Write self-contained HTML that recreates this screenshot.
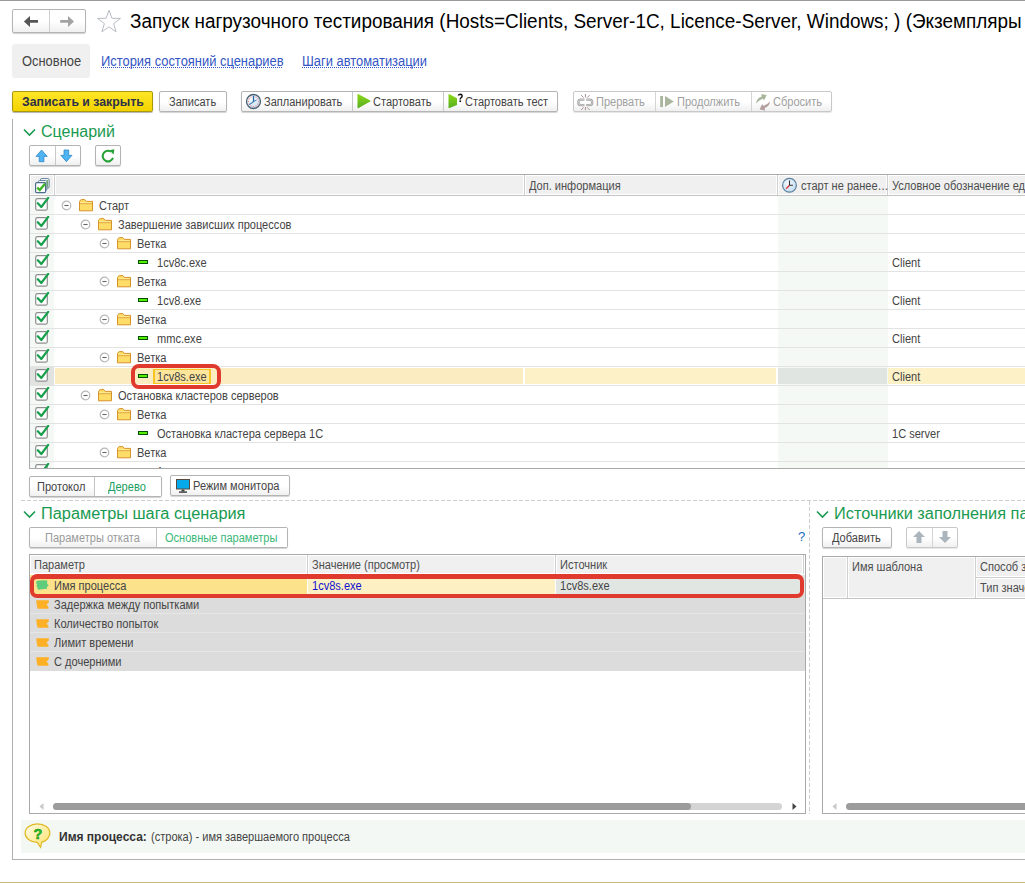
<!DOCTYPE html><html><head><meta charset="utf-8"><style>
*{box-sizing:border-box;margin:0;padding:0}
html,body{width:1025px;height:883px;overflow:hidden;background:#fff}
body{position:relative;font-family:"Liberation Sans",sans-serif;font-size:12px;color:#333}
.a{position:absolute}
.t{position:absolute;white-space:nowrap;line-height:1}
.btn{position:absolute;border:1px solid #b4b4b4;border-radius:2px;background:linear-gradient(#fff,#fff 50%,#f0f0f0);box-shadow:0 1px 1px rgba(0,0,0,.18)}
.hl{position:absolute;height:1px}
.vl{position:absolute;width:1px}
</style></head><body>
<div class="a" style="left:0;top:0;width:1025px;height:1px;background:#9a9a9a"></div>
<div class="btn" style="left:12px;top:9px;width:74px;height:24px"></div>
<div class="vl" style="left:49px;top:10px;height:22px;background:#d0d0d0"></div>
<svg class="a" style="left:23px;top:15px" width="16" height="13" viewBox="0 0 16 13"><path d="M0.9 6.4 L7 0.9 V5 H15 V7.8 H7 V11.9 Z" fill="#555"/></svg>
<svg class="a" style="left:59px;top:15px" width="16" height="13" viewBox="0 0 16 13"><path d="M15 6.4 L9 0.9 V5 H1.2 V7.8 H9 V11.9 Z" fill="#a3a3a3"/></svg>
<svg class="a" style="left:96px;top:9px" width="26" height="24" viewBox="0 0 26 24"><path d="M13 1.2 L15.9 9.3 L24.5 9.4 L17.6 14.6 L20.1 22.8 L13 17.9 L5.9 22.8 L8.4 14.6 L1.5 9.4 L10.1 9.3 Z" fill="none" stroke="#b8bcc4" stroke-width="1"/></svg>
<div class="t" style="left:130px;top:11px;font-size:20px;transform:scaleX(0.946);transform-origin:0 0;color:#000">Запуск нагрузочного тестирования (Hosts=Clients, Server-1C, Licence-Server, Windows; ) (Экземпляры</div>
<div class="a" style="left:12px;top:44px;width:78px;height:34px;background:#f0f0f0;border-radius:3px"></div>
<div class="t" style="left:22px;top:54px;font-size:14px;transform:scaleX(0.922);transform-origin:0 0;color:#444">Основное</div>
<div class="t" style="left:101px;top:54px;font-size:14px;transform:scaleX(0.922);transform-origin:0 0;color:#3356c4">История состояний сценариев</div>
<div class="a" style="left:101px;top:67px;width:182px;height:1px;background:repeating-linear-gradient(90deg,#3356c4 0 1px,transparent 1px 2px)"></div>
<div class="t" style="left:302px;top:54px;font-size:14px;transform:scaleX(0.922);transform-origin:0 0;color:#3356c4">Шаги автоматизации</div>
<div class="a" style="left:302px;top:67px;width:122px;height:1px;background:repeating-linear-gradient(90deg,#3356c4 0 1px,transparent 1px 2px)"></div>
<div class="a" style="left:12px;top:91px;width:141px;height:21px;border:1px solid #a8980c;border-radius:2px;background:linear-gradient(#ffe628,#f3d200);box-shadow:0 1px 1px rgba(0,0,0,.3)"></div>
<div class="t" style="left:22px;top:96px;font-size:12.3px;font-weight:bold;color:#2e3048">Записать и закрыть</div>
<div class="btn" style="left:159px;top:91px;width:68px;height:21px"></div>
<div class="t" style="left:169px;top:96px;transform:scaleX(0.92);transform-origin:0 0;color:#444">Записать</div>
<div class="btn" style="left:241px;top:91px;width:317px;height:21px"></div>
<div class="vl" style="left:352px;top:92px;height:19px;background:#c8c8c8"></div>
<div class="vl" style="left:443px;top:92px;height:19px;background:#c8c8c8"></div>
<div class="t" style="left:264px;top:96px;transform:scaleX(0.92);transform-origin:0 0;color:#444">Запланировать</div>
<div class="t" style="left:373px;top:96px;transform:scaleX(0.92);transform-origin:0 0;color:#444">Стартовать</div>
<div class="t" style="left:465px;top:96px;transform:scaleX(0.92);transform-origin:0 0;color:#444">Стартовать тест</div>
<svg class="a" style="left:245px;top:93px" width="17" height="17" viewBox="0 0 17 17"><defs><radialGradient id="cg" cx="0.35" cy="0.3" r="0.8"><stop offset="0" stop-color="#fff"/><stop offset="1" stop-color="#bfdcf2"/></radialGradient></defs><circle cx="8.5" cy="8.5" r="7" fill="url(#cg)" stroke="#4a5f70" stroke-width="1.3"/><circle cx="8.50" cy="3.40" r="0.6" fill="#e46a6a"/><circle cx="11.05" cy="4.08" r="0.6" fill="#e46a6a"/><circle cx="12.92" cy="5.95" r="0.6" fill="#e46a6a"/><circle cx="13.60" cy="8.50" r="0.6" fill="#e46a6a"/><circle cx="12.92" cy="11.05" r="0.6" fill="#e46a6a"/><circle cx="11.05" cy="12.92" r="0.6" fill="#e46a6a"/><circle cx="8.50" cy="13.60" r="0.6" fill="#e46a6a"/><circle cx="5.95" cy="12.92" r="0.6" fill="#e46a6a"/><circle cx="4.08" cy="11.05" r="0.6" fill="#e46a6a"/><circle cx="3.40" cy="8.50" r="0.6" fill="#e46a6a"/><circle cx="4.08" cy="5.95" r="0.6" fill="#e46a6a"/><circle cx="5.95" cy="4.08" r="0.6" fill="#e46a6a"/><path d="M8.5 9 V2.8" stroke="#2466a6" stroke-width="1.3"/><path d="M8.5 8.8 L4.2 11.6" stroke="#3a7ab4" stroke-width="1.1"/><path d="M8.5 8.6 L11.5 7" stroke="#3a7ab4" stroke-width="1"/></svg>
<svg class="a" style="left:356px;top:93px" width="16" height="17" viewBox="0 0 16 17"><defs><linearGradient id="pg" x1="0" y1="0" x2="0" y2="1"><stop offset="0" stop-color="#8cd816"/><stop offset="1" stop-color="#56ae22"/></linearGradient></defs><path d="M1.5 1.8 Q1.5 0.6 2.6 1.2 L14.2 7.6 Q15 8.1 14.2 8.6 L2.6 15 Q1.5 15.6 1.5 14.4 Z" fill="url(#pg)"/></svg>
<svg class="a" style="left:447px;top:93px" width="17" height="17" viewBox="0 0 17 17"><path d="M1.5 1.8 Q1.5 0.6 2.6 1.2 L10 5.3 V12 L2.6 15 Q1.5 15.6 1.5 14.4 Z" fill="url(#pg)"/><path d="M11.3 2.6 Q11.8 1.3 13.3 1.3 Q15.2 1.4 15.1 3.1 Q15 4.2 13.8 5 Q13.2 5.5 13.2 6.4" fill="none" stroke="#111" stroke-width="1.5"/><rect x="12.4" y="7.4" width="1.7" height="1.6" fill="#111"/></svg>
<div class="btn" style="left:573px;top:91px;width:259px;height:21px;box-shadow:0 1px 1px rgba(0,0,0,.1);border-color:#c8c8c8"></div>
<div class="vl" style="left:655px;top:92px;height:19px;background:#d4d4d4"></div>
<div class="vl" style="left:751px;top:92px;height:19px;background:#d4d4d4"></div>
<div class="t" style="left:596px;top:96px;transform:scaleX(0.92);transform-origin:0 0;color:#a0a0a0">Прервать</div>
<div class="t" style="left:677px;top:96px;transform:scaleX(0.92);transform-origin:0 0;color:#a0a0a0">Продолжить</div>
<div class="t" style="left:773px;top:96px;transform:scaleX(0.92);transform-origin:0 0;color:#a0a0a0">Сбросить</div>
<svg class="a" style="left:577px;top:93px" width="17" height="18" viewBox="0 0 17 18"><path d="M7.4 6.7 H4 A2.7 2.7 0 0 0 4 12.1 H7.4" fill="none" stroke="#a4a4a4" stroke-width="2.3"/><path d="M7.4 6.7 H4 A2.7 2.7 0 0 0 4 12.1 H7.4" fill="none" stroke="#dedede" stroke-width="0.7"/><path d="M9.2 6.7 H12.6 A2.7 2.7 0 0 1 12.6 12.1 H9.2" fill="none" stroke="#a4a4a4" stroke-width="2.3"/><path d="M9.2 6.7 H12.6 A2.7 2.7 0 0 1 12.6 12.1 H9.2" fill="none" stroke="#dedede" stroke-width="0.7"/><path d="M8.4 1 V4.4 M4.2 2.2 L6.6 4.6 M12.6 2.2 L10.2 4.6 M8.4 14 V17.2 M4.2 17 L6.6 14.4 M12.6 17 L10.2 14.4" stroke="#a88e8e" stroke-width="1"/></svg>
<svg class="a" style="left:660px;top:96px" width="14" height="11" viewBox="0 0 14 11"><rect x="0.2" y="0" width="2.8" height="11" fill="#a9b69d"/><path d="M5 0 L13.8 5.5 L5 11 Z" fill="#a9b69d"/></svg>
<svg class="a" style="left:755px;top:93px" width="16" height="18" viewBox="0 0 16 18"><path d="M1 10.5 Q1.8 5.2 6.8 3.6 L6.2 1.2 L11.6 2 L9 7.6 L8 5.6 Q4.2 7 1 10.5 Z" fill="#a7b59a"/><path d="M15 8.6 Q14.6 13.4 9.6 15 L10.2 17.4 L4.6 16.6 L7.2 11 L8.3 13 Q12.4 11.8 15 8.6 Z" fill="#b39d9d"/></svg>
<div class="vl" style="left:12px;top:119px;height:741px;background:#b0b0b0"></div>
<div class="hl" style="left:12px;top:859px;width:1013px;background:#b0b0b0"></div>
<svg class="a" style="left:23px;top:128px" width="13" height="9" viewBox="0 0 13 9"><path d="M1 1.5 L6.5 7 L12 1.5" fill="none" stroke="#1a9a50" stroke-width="1.6"/></svg>
<div class="t" style="left:41px;top:124px;font-size:16px;color:#1a9a50">Сценарий</div>
<div class="btn" style="left:29px;top:145px;width:52px;height:21px"></div>
<div class="vl" style="left:55px;top:146px;height:19px;background:#c8c8c8"></div>
<svg class="a" style="left:35px;top:149px" width="14" height="14" viewBox="0 0 14 14"><path d="M6.6 1 L12.2 7.4 H8.9 V12.7 H4.2 V7.4 H1 Z" fill="#50b4f2" stroke="#2c88c9" stroke-width="0.8" stroke-linejoin="round"/></svg>
<svg class="a" style="left:60px;top:149px" width="14" height="14" viewBox="0 0 14 14"><path d="M6.4 12.7 L12 6.3 H8.7 V1 H4 V6.3 H0.8 Z" fill="#50b4f2" stroke="#2c88c9" stroke-width="0.8" stroke-linejoin="round"/></svg>
<div class="btn" style="left:95px;top:145px;width:26px;height:21px"></div>
<svg class="a" style="left:100px;top:148px" width="16" height="16" viewBox="0 0 16 16"><path d="M12.98 9.91 A5.3 5.3 0 1 1 10.65 3.51" fill="none" stroke="#25a136" stroke-width="2"/><path d="M9.4 2.2 L14.4 1.2 L13.6 6.6 Z" fill="#25a136"/></svg>
<div class="a" style="left:29px;top:174px;width:996px;height:295px;border:1px solid #a9a9a9;border-right:none;overflow:hidden">
<div class="a" style="left:0;top:0;width:1000px;height:20px;background:#fff"></div>
<div class="a" style="left:0;top:20px;width:1000px;height:1px;background:#c4c4c4"></div>
<div class="a" style="left:1px;top:1px;width:22px;height:18px;background:#f0f0f0"></div>
<div class="a" style="left:24px;top:0;width:1px;height:20px;background:#cfcfcf"></div>
<div class="a" style="left:26px;top:1px;width:467px;height:18px;background:#f0f0f0"></div>
<div class="a" style="left:494px;top:0;width:1px;height:20px;background:#cfcfcf"></div>
<div class="a" style="left:496px;top:1px;width:250px;height:18px;background:#f0f0f0"></div>
<div class="a" style="left:747px;top:0;width:1px;height:20px;background:#cfcfcf"></div>
<div class="a" style="left:749px;top:1px;width:107px;height:18px;background:#f0f0f0"></div>
<div class="a" style="left:857px;top:0;width:1px;height:20px;background:#cfcfcf"></div>
<div class="a" style="left:859px;top:1px;width:210px;height:18px;background:#f0f0f0"></div>
<div class="t" style="left:499px;top:5px;font-size:12px;transform:scaleX(0.92);transform-origin:0 0;color:#4d4d4d">Доп. информация</div>
<div class="t" style="left:771px;top:5px;font-size:12px;transform:scaleX(0.92);transform-origin:0 0;color:#4d4d4d">старт не ранее…</div>
<div class="t" style="left:862px;top:5px;font-size:12px;transform:scaleX(0.92);transform-origin:0 0;color:#4d4d4d">Условное обозначение ед</div>
<svg class="a" style="left:752px;top:1px" width="17" height="17" viewBox="0 0 17 17"><defs><radialGradient id="hcg" cx="0.4" cy="0.35" r="0.75"><stop offset="0" stop-color="#f4f9fd"/><stop offset="1" stop-color="#bcd8ee"/></radialGradient></defs><circle cx="7.5" cy="9.3" r="6.9" fill="url(#hcg)" stroke="#5b7f9b" stroke-width="1.2"/><path d="M7.5 4.6 V9.3 H10.9" stroke="#333" stroke-width="1.1" fill="none"/><path d="M7.3 9.5 L4.2 12.6" stroke="#e81c1c" stroke-width="1.2"/></svg>
<svg class="a" style="left:5px;top:3px" width="16" height="16" viewBox="0 0 16 16"><rect x="5.5" y="0.6" width="8.6" height="9.5" rx="1.2" fill="#fff" stroke="#5f7d99" stroke-width="1"/><path d="M12.5 2 V9" stroke="#7ac060" stroke-width="1.4"/><rect x="3.3" y="2.6" width="8.6" height="9.8" rx="1.2" fill="#fff" stroke="#5f7d99" stroke-width="1"/><path d="M10.4 4.2 V11" stroke="#7ac060" stroke-width="1.4"/><rect x="0.6" y="4.6" width="10" height="10" rx="1.2" fill="#fff" stroke="#4e6e8e" stroke-width="1.2"/><path d="M2.2 9.6 L4.8 12 L10 5.8" fill="none" stroke="#3cb526" stroke-width="2.4"/></svg>
<div class="a" style="left:0;top:21px;width:24px;height:300px;background:#f4f9f5"></div>
<div class="a" style="left:748px;top:21px;width:110px;height:300px;background:#f4f9f5"></div>
<div class="a" style="left:0;top:39px;width:1000px;height:1px;background:#e3e3e3"></div>
<svg class="a" style="left:5px;top:22px" width="15" height="15" viewBox="0 0 15 15"><rect x="0.7" y="1.6" width="11.6" height="11.6" rx="1.8" fill="#fff" stroke="#8e8e8e" stroke-width="1.2"/><path d="M2.8 6.2 L6.3 10 L13.2 0.9" fill="none" stroke="#16a04b" stroke-width="2.2" stroke-linecap="round" stroke-linejoin="round"/></svg>
<svg class="a" style="left:31px;top:25px" width="11" height="11" viewBox="0 0 11 11"><circle cx="5.5" cy="5.5" r="4.3" fill="#fff" stroke="#b8b8b8" stroke-width="1.2"/><path d="M3.4 5.5 H7.6" stroke="#666" stroke-width="1.1"/></svg>
<svg class="a" style="left:49px;top:24px" width="15" height="13" viewBox="0 0 15 13"><path d="M0.5 11.8 V2.6 Q0.5 2 1 1.6 L2.3 0.6 H5.8 L7.4 2.4 H13.5 V11.8 Z" fill="#fddc68" stroke="#d8922a" stroke-width="1"/><rect x="1" y="3" width="12" height="1.4" fill="#fde98e"/><path d="M1 4.7 H13" stroke="#dea040" stroke-width="0.9"/></svg>
<div class="t" style="left:69px;top:25px;font-size:12px;transform:scaleX(0.92);transform-origin:0 0;color:#444">Старт</div>
<div class="a" style="left:0;top:58px;width:1000px;height:1px;background:#e3e3e3"></div>
<svg class="a" style="left:5px;top:41px" width="15" height="15" viewBox="0 0 15 15"><rect x="0.7" y="1.6" width="11.6" height="11.6" rx="1.8" fill="#fff" stroke="#8e8e8e" stroke-width="1.2"/><path d="M2.8 6.2 L6.3 10 L13.2 0.9" fill="none" stroke="#16a04b" stroke-width="2.2" stroke-linecap="round" stroke-linejoin="round"/></svg>
<svg class="a" style="left:50px;top:44px" width="11" height="11" viewBox="0 0 11 11"><circle cx="5.5" cy="5.5" r="4.3" fill="#fff" stroke="#b8b8b8" stroke-width="1.2"/><path d="M3.4 5.5 H7.6" stroke="#666" stroke-width="1.1"/></svg>
<svg class="a" style="left:68px;top:43px" width="15" height="13" viewBox="0 0 15 13"><path d="M0.5 11.8 V2.6 Q0.5 2 1 1.6 L2.3 0.6 H5.8 L7.4 2.4 H13.5 V11.8 Z" fill="#fddc68" stroke="#d8922a" stroke-width="1"/><rect x="1" y="3" width="12" height="1.4" fill="#fde98e"/><path d="M1 4.7 H13" stroke="#dea040" stroke-width="0.9"/></svg>
<div class="t" style="left:88px;top:44px;font-size:12px;transform:scaleX(0.92);transform-origin:0 0;color:#444">Завершение зависших процессов</div>
<div class="a" style="left:0;top:77px;width:1000px;height:1px;background:#e3e3e3"></div>
<svg class="a" style="left:5px;top:60px" width="15" height="15" viewBox="0 0 15 15"><rect x="0.7" y="1.6" width="11.6" height="11.6" rx="1.8" fill="#fff" stroke="#8e8e8e" stroke-width="1.2"/><path d="M2.8 6.2 L6.3 10 L13.2 0.9" fill="none" stroke="#16a04b" stroke-width="2.2" stroke-linecap="round" stroke-linejoin="round"/></svg>
<svg class="a" style="left:69px;top:63px" width="11" height="11" viewBox="0 0 11 11"><circle cx="5.5" cy="5.5" r="4.3" fill="#fff" stroke="#b8b8b8" stroke-width="1.2"/><path d="M3.4 5.5 H7.6" stroke="#666" stroke-width="1.1"/></svg>
<svg class="a" style="left:87px;top:62px" width="15" height="13" viewBox="0 0 15 13"><path d="M0.5 11.8 V2.6 Q0.5 2 1 1.6 L2.3 0.6 H5.8 L7.4 2.4 H13.5 V11.8 Z" fill="#fddc68" stroke="#d8922a" stroke-width="1"/><rect x="1" y="3" width="12" height="1.4" fill="#fde98e"/><path d="M1 4.7 H13" stroke="#dea040" stroke-width="0.9"/></svg>
<div class="t" style="left:107px;top:63px;font-size:12px;transform:scaleX(0.92);transform-origin:0 0;color:#444">Ветка</div>
<div class="a" style="left:0;top:96px;width:1000px;height:1px;background:#e3e3e3"></div>
<svg class="a" style="left:5px;top:79px" width="15" height="15" viewBox="0 0 15 15"><rect x="0.7" y="1.6" width="11.6" height="11.6" rx="1.8" fill="#fff" stroke="#8e8e8e" stroke-width="1.2"/><path d="M2.8 6.2 L6.3 10 L13.2 0.9" fill="none" stroke="#16a04b" stroke-width="2.2" stroke-linecap="round" stroke-linejoin="round"/></svg>
<div class="a" style="left:108px;top:85px;width:10px;height:4px;background:#55ee00;border:1px solid #005000"></div>
<div class="t" style="left:127px;top:82px;font-size:12px;transform:scaleX(0.92);transform-origin:0 0;color:#444">1cv8c.exe</div>
<div class="t" style="left:862px;top:82px;font-size:12px;transform:scaleX(0.92);transform-origin:0 0;color:#444">Client</div>
<div class="a" style="left:0;top:115px;width:1000px;height:1px;background:#e3e3e3"></div>
<svg class="a" style="left:5px;top:98px" width="15" height="15" viewBox="0 0 15 15"><rect x="0.7" y="1.6" width="11.6" height="11.6" rx="1.8" fill="#fff" stroke="#8e8e8e" stroke-width="1.2"/><path d="M2.8 6.2 L6.3 10 L13.2 0.9" fill="none" stroke="#16a04b" stroke-width="2.2" stroke-linecap="round" stroke-linejoin="round"/></svg>
<svg class="a" style="left:69px;top:101px" width="11" height="11" viewBox="0 0 11 11"><circle cx="5.5" cy="5.5" r="4.3" fill="#fff" stroke="#b8b8b8" stroke-width="1.2"/><path d="M3.4 5.5 H7.6" stroke="#666" stroke-width="1.1"/></svg>
<svg class="a" style="left:87px;top:100px" width="15" height="13" viewBox="0 0 15 13"><path d="M0.5 11.8 V2.6 Q0.5 2 1 1.6 L2.3 0.6 H5.8 L7.4 2.4 H13.5 V11.8 Z" fill="#fddc68" stroke="#d8922a" stroke-width="1"/><rect x="1" y="3" width="12" height="1.4" fill="#fde98e"/><path d="M1 4.7 H13" stroke="#dea040" stroke-width="0.9"/></svg>
<div class="t" style="left:107px;top:101px;font-size:12px;transform:scaleX(0.92);transform-origin:0 0;color:#444">Ветка</div>
<div class="a" style="left:0;top:134px;width:1000px;height:1px;background:#e3e3e3"></div>
<svg class="a" style="left:5px;top:117px" width="15" height="15" viewBox="0 0 15 15"><rect x="0.7" y="1.6" width="11.6" height="11.6" rx="1.8" fill="#fff" stroke="#8e8e8e" stroke-width="1.2"/><path d="M2.8 6.2 L6.3 10 L13.2 0.9" fill="none" stroke="#16a04b" stroke-width="2.2" stroke-linecap="round" stroke-linejoin="round"/></svg>
<div class="a" style="left:108px;top:123px;width:10px;height:4px;background:#55ee00;border:1px solid #005000"></div>
<div class="t" style="left:127px;top:120px;font-size:12px;transform:scaleX(0.92);transform-origin:0 0;color:#444">1cv8.exe</div>
<div class="t" style="left:862px;top:120px;font-size:12px;transform:scaleX(0.92);transform-origin:0 0;color:#444">Client</div>
<div class="a" style="left:0;top:153px;width:1000px;height:1px;background:#e3e3e3"></div>
<svg class="a" style="left:5px;top:136px" width="15" height="15" viewBox="0 0 15 15"><rect x="0.7" y="1.6" width="11.6" height="11.6" rx="1.8" fill="#fff" stroke="#8e8e8e" stroke-width="1.2"/><path d="M2.8 6.2 L6.3 10 L13.2 0.9" fill="none" stroke="#16a04b" stroke-width="2.2" stroke-linecap="round" stroke-linejoin="round"/></svg>
<svg class="a" style="left:69px;top:139px" width="11" height="11" viewBox="0 0 11 11"><circle cx="5.5" cy="5.5" r="4.3" fill="#fff" stroke="#b8b8b8" stroke-width="1.2"/><path d="M3.4 5.5 H7.6" stroke="#666" stroke-width="1.1"/></svg>
<svg class="a" style="left:87px;top:138px" width="15" height="13" viewBox="0 0 15 13"><path d="M0.5 11.8 V2.6 Q0.5 2 1 1.6 L2.3 0.6 H5.8 L7.4 2.4 H13.5 V11.8 Z" fill="#fddc68" stroke="#d8922a" stroke-width="1"/><rect x="1" y="3" width="12" height="1.4" fill="#fde98e"/><path d="M1 4.7 H13" stroke="#dea040" stroke-width="0.9"/></svg>
<div class="t" style="left:107px;top:139px;font-size:12px;transform:scaleX(0.92);transform-origin:0 0;color:#444">Ветка</div>
<div class="a" style="left:0;top:172px;width:1000px;height:1px;background:#e3e3e3"></div>
<svg class="a" style="left:5px;top:155px" width="15" height="15" viewBox="0 0 15 15"><rect x="0.7" y="1.6" width="11.6" height="11.6" rx="1.8" fill="#fff" stroke="#8e8e8e" stroke-width="1.2"/><path d="M2.8 6.2 L6.3 10 L13.2 0.9" fill="none" stroke="#16a04b" stroke-width="2.2" stroke-linecap="round" stroke-linejoin="round"/></svg>
<div class="a" style="left:108px;top:161px;width:10px;height:4px;background:#55ee00;border:1px solid #005000"></div>
<div class="t" style="left:127px;top:158px;font-size:12px;transform:scaleX(0.92);transform-origin:0 0;color:#444">mmc.exe</div>
<div class="t" style="left:862px;top:158px;font-size:12px;transform:scaleX(0.92);transform-origin:0 0;color:#444">Client</div>
<div class="a" style="left:0;top:191px;width:1000px;height:1px;background:#e3e3e3"></div>
<svg class="a" style="left:5px;top:174px" width="15" height="15" viewBox="0 0 15 15"><rect x="0.7" y="1.6" width="11.6" height="11.6" rx="1.8" fill="#fff" stroke="#8e8e8e" stroke-width="1.2"/><path d="M2.8 6.2 L6.3 10 L13.2 0.9" fill="none" stroke="#16a04b" stroke-width="2.2" stroke-linecap="round" stroke-linejoin="round"/></svg>
<svg class="a" style="left:69px;top:177px" width="11" height="11" viewBox="0 0 11 11"><circle cx="5.5" cy="5.5" r="4.3" fill="#fff" stroke="#b8b8b8" stroke-width="1.2"/><path d="M3.4 5.5 H7.6" stroke="#666" stroke-width="1.1"/></svg>
<svg class="a" style="left:87px;top:176px" width="15" height="13" viewBox="0 0 15 13"><path d="M0.5 11.8 V2.6 Q0.5 2 1 1.6 L2.3 0.6 H5.8 L7.4 2.4 H13.5 V11.8 Z" fill="#fddc68" stroke="#d8922a" stroke-width="1"/><rect x="1" y="3" width="12" height="1.4" fill="#fde98e"/><path d="M1 4.7 H13" stroke="#dea040" stroke-width="0.9"/></svg>
<div class="t" style="left:107px;top:177px;font-size:12px;transform:scaleX(0.92);transform-origin:0 0;color:#444">Ветка</div>
<div class="a" style="left:25px;top:193px;width:468px;height:16px;background:#fcecc2"></div>
<div class="a" style="left:495px;top:193px;width:251px;height:16px;background:#fdf1c8"></div>
<div class="a" style="left:748px;top:193px;width:109px;height:16px;background:#e1e5e1"></div>
<div class="a" style="left:858px;top:193px;width:200px;height:16px;background:#fdf1c8"></div>
<div class="a" style="left:0;top:192px;width:24px;height:18px;background:#e1e3e1"></div>
<div class="a" style="left:0;top:210px;width:1000px;height:1px;background:#e3e3e3"></div>
<svg class="a" style="left:5px;top:193px" width="15" height="15" viewBox="0 0 15 15"><rect x="0.7" y="1.6" width="11.6" height="11.6" rx="1.8" fill="#fff" stroke="#8e8e8e" stroke-width="1.2"/><path d="M2.8 6.2 L6.3 10 L13.2 0.9" fill="none" stroke="#16a04b" stroke-width="2.2" stroke-linecap="round" stroke-linejoin="round"/></svg>
<div class="a" style="left:108px;top:199px;width:10px;height:4px;background:#55ee00;border:1px solid #005000"></div>
<div class="a" style="left:123px;top:194px;width:58px;height:15px;background:#fde59c;border:2px solid #f6c423;border-width:1px 2px"></div>
<div class="t" style="left:127px;top:196px;font-size:12px;transform:scaleX(0.92);transform-origin:0 0;color:#444">1cv8s.exe</div>
<div class="t" style="left:862px;top:196px;font-size:12px;transform:scaleX(0.92);transform-origin:0 0;color:#444">Client</div>
<div class="a" style="left:0;top:229px;width:1000px;height:1px;background:#e3e3e3"></div>
<svg class="a" style="left:5px;top:212px" width="15" height="15" viewBox="0 0 15 15"><rect x="0.7" y="1.6" width="11.6" height="11.6" rx="1.8" fill="#fff" stroke="#8e8e8e" stroke-width="1.2"/><path d="M2.8 6.2 L6.3 10 L13.2 0.9" fill="none" stroke="#16a04b" stroke-width="2.2" stroke-linecap="round" stroke-linejoin="round"/></svg>
<svg class="a" style="left:50px;top:215px" width="11" height="11" viewBox="0 0 11 11"><circle cx="5.5" cy="5.5" r="4.3" fill="#fff" stroke="#b8b8b8" stroke-width="1.2"/><path d="M3.4 5.5 H7.6" stroke="#666" stroke-width="1.1"/></svg>
<svg class="a" style="left:68px;top:214px" width="15" height="13" viewBox="0 0 15 13"><path d="M0.5 11.8 V2.6 Q0.5 2 1 1.6 L2.3 0.6 H5.8 L7.4 2.4 H13.5 V11.8 Z" fill="#fddc68" stroke="#d8922a" stroke-width="1"/><rect x="1" y="3" width="12" height="1.4" fill="#fde98e"/><path d="M1 4.7 H13" stroke="#dea040" stroke-width="0.9"/></svg>
<div class="t" style="left:88px;top:215px;font-size:12px;transform:scaleX(0.92);transform-origin:0 0;color:#444">Остановка кластеров серверов</div>
<div class="a" style="left:0;top:248px;width:1000px;height:1px;background:#e3e3e3"></div>
<svg class="a" style="left:5px;top:231px" width="15" height="15" viewBox="0 0 15 15"><rect x="0.7" y="1.6" width="11.6" height="11.6" rx="1.8" fill="#fff" stroke="#8e8e8e" stroke-width="1.2"/><path d="M2.8 6.2 L6.3 10 L13.2 0.9" fill="none" stroke="#16a04b" stroke-width="2.2" stroke-linecap="round" stroke-linejoin="round"/></svg>
<svg class="a" style="left:69px;top:234px" width="11" height="11" viewBox="0 0 11 11"><circle cx="5.5" cy="5.5" r="4.3" fill="#fff" stroke="#b8b8b8" stroke-width="1.2"/><path d="M3.4 5.5 H7.6" stroke="#666" stroke-width="1.1"/></svg>
<svg class="a" style="left:87px;top:233px" width="15" height="13" viewBox="0 0 15 13"><path d="M0.5 11.8 V2.6 Q0.5 2 1 1.6 L2.3 0.6 H5.8 L7.4 2.4 H13.5 V11.8 Z" fill="#fddc68" stroke="#d8922a" stroke-width="1"/><rect x="1" y="3" width="12" height="1.4" fill="#fde98e"/><path d="M1 4.7 H13" stroke="#dea040" stroke-width="0.9"/></svg>
<div class="t" style="left:107px;top:234px;font-size:12px;transform:scaleX(0.92);transform-origin:0 0;color:#444">Ветка</div>
<div class="a" style="left:0;top:267px;width:1000px;height:1px;background:#e3e3e3"></div>
<svg class="a" style="left:5px;top:250px" width="15" height="15" viewBox="0 0 15 15"><rect x="0.7" y="1.6" width="11.6" height="11.6" rx="1.8" fill="#fff" stroke="#8e8e8e" stroke-width="1.2"/><path d="M2.8 6.2 L6.3 10 L13.2 0.9" fill="none" stroke="#16a04b" stroke-width="2.2" stroke-linecap="round" stroke-linejoin="round"/></svg>
<div class="a" style="left:108px;top:256px;width:10px;height:4px;background:#55ee00;border:1px solid #005000"></div>
<div class="t" style="left:127px;top:253px;font-size:12px;transform:scaleX(0.92);transform-origin:0 0;color:#444">Остановка кластера сервера 1С</div>
<div class="t" style="left:862px;top:253px;font-size:12px;transform:scaleX(0.92);transform-origin:0 0;color:#444">1C server</div>
<div class="a" style="left:0;top:286px;width:1000px;height:1px;background:#e3e3e3"></div>
<svg class="a" style="left:5px;top:269px" width="15" height="15" viewBox="0 0 15 15"><rect x="0.7" y="1.6" width="11.6" height="11.6" rx="1.8" fill="#fff" stroke="#8e8e8e" stroke-width="1.2"/><path d="M2.8 6.2 L6.3 10 L13.2 0.9" fill="none" stroke="#16a04b" stroke-width="2.2" stroke-linecap="round" stroke-linejoin="round"/></svg>
<svg class="a" style="left:69px;top:272px" width="11" height="11" viewBox="0 0 11 11"><circle cx="5.5" cy="5.5" r="4.3" fill="#fff" stroke="#b8b8b8" stroke-width="1.2"/><path d="M3.4 5.5 H7.6" stroke="#666" stroke-width="1.1"/></svg>
<svg class="a" style="left:87px;top:271px" width="15" height="13" viewBox="0 0 15 13"><path d="M0.5 11.8 V2.6 Q0.5 2 1 1.6 L2.3 0.6 H5.8 L7.4 2.4 H13.5 V11.8 Z" fill="#fddc68" stroke="#d8922a" stroke-width="1"/><rect x="1" y="3" width="12" height="1.4" fill="#fde98e"/><path d="M1 4.7 H13" stroke="#dea040" stroke-width="0.9"/></svg>
<div class="t" style="left:107px;top:272px;font-size:12px;transform:scaleX(0.92);transform-origin:0 0;color:#444">Ветка</div>
<div class="a" style="left:0;top:305px;width:1000px;height:1px;background:#e3e3e3"></div>
<svg class="a" style="left:5px;top:288px" width="15" height="15" viewBox="0 0 15 15"><rect x="0.7" y="1.6" width="11.6" height="11.6" rx="1.8" fill="#fff" stroke="#8e8e8e" stroke-width="1.2"/><path d="M2.8 6.2 L6.3 10 L13.2 0.9" fill="none" stroke="#16a04b" stroke-width="2.2" stroke-linecap="round" stroke-linejoin="round"/></svg>
<div class="a" style="left:108px;top:294px;width:10px;height:4px;background:#55ee00;border:1px solid #005000"></div>
<div class="t" style="left:127px;top:291px;font-size:12px;transform:scaleX(0.92);transform-origin:0 0;color:#444">1</div>
<div class="t" style="left:862px;top:291px;font-size:12px;transform:scaleX(0.92);transform-origin:0 0;color:#444">.</div>
</div>
<div class="a" style="left:131px;top:364px;width:90px;height:25px;border:4px solid #e03a2e;border-radius:8px"></div>
<div class="btn" style="left:29px;top:476px;width:133px;height:21px"></div>
<div class="a" style="left:94px;top:477px;width:67px;height:19px;background:#fff;border-left:1px solid #c4c4c4"></div>
<div class="t" style="left:37px;top:481px;font-size:12px;transform:scaleX(0.92);transform-origin:0 0;color:#444">Протокол</div>
<div class="t" style="left:108px;top:481px;font-size:12px;transform:scaleX(0.92);transform-origin:0 0;color:#20a060">Дерево</div>
<div class="btn" style="left:170px;top:475px;width:120px;height:21px"></div>
<svg class="a" style="left:176px;top:479px" width="14" height="14" viewBox="0 0 14 14"><rect x="0.5" y="0.5" width="13" height="9.5" fill="#05aaec" stroke="#5a4a3e" stroke-width="1"/><path d="M5.6 10.5 H8.4 L8.6 12.6 H5.4 Z" fill="#444"/><rect x="3" y="12.4" width="8" height="1.4" fill="#3a3a3a"/></svg>
<div class="t" style="left:193px;top:480px;font-size:12px;transform:scaleX(0.92);transform-origin:0 0;color:#444">Режим монитора</div>
<div class="a" style="left:21px;top:500px;width:1004px;height:1px;background:repeating-linear-gradient(90deg,#cfcfcf 0 4px,transparent 4px 6px)"></div>
<div class="a" style="left:809px;top:501px;width:1px;height:313px;background:repeating-linear-gradient(180deg,#cfcfcf 0 4px,transparent 4px 6px)"></div>
<svg class="a" style="left:23px;top:510px" width="13" height="9" viewBox="0 0 13 9"><path d="M1 1.5 L6.5 7 L12 1.5" fill="none" stroke="#1a9a50" stroke-width="1.6"/></svg>
<div class="t" style="left:41px;top:506px;font-size:16px;transform:scaleX(1.02);transform-origin:0 0;color:#1a9a50">Параметры шага сценария</div>
<div class="btn" style="left:29px;top:527px;width:259px;height:21px"></div>
<div class="a" style="left:156px;top:528px;width:131px;height:19px;background:#fff;border-left:1px solid #c4c4c4"></div>
<div class="t" style="left:45px;top:532px;font-size:12px;transform:scaleX(0.92);transform-origin:0 0;color:#9a9a9a">Параметры отката</div>
<div class="t" style="left:165px;top:532px;font-size:12px;transform:scaleX(0.92);transform-origin:0 0;color:#3cb878">Основные параметры</div>
<div class="t" style="left:798px;top:530px;font-size:13px;color:#1a6cc4">?</div>
<div class="a" style="left:29px;top:554px;width:777px;height:260px;border:1px solid #a9a9a9;overflow:hidden">
<div class="a" style="left:0;top:0;width:775px;height:19px;background:#fff"></div>
<div class="a" style="left:1px;top:1px;width:275px;height:17px;background:#f0f0f0"></div>
<div class="a" style="left:277px;top:0;width:1px;height:19px;background:#cfcfcf"></div>
<div class="a" style="left:279px;top:1px;width:245px;height:17px;background:#f0f0f0"></div>
<div class="a" style="left:525px;top:0;width:1px;height:19px;background:#cfcfcf"></div>
<div class="a" style="left:527px;top:1px;width:245px;height:17px;background:#f0f0f0"></div>
<div class="a" style="left:773px;top:0;width:1px;height:19px;background:#cfcfcf"></div>
<div class="a" style="left:775px;top:1px;width:0px;height:17px;background:#f0f0f0"></div>
<div class="t" style="left:4px;top:4px;font-size:12px;transform:scaleX(0.92);transform-origin:0 0;color:#4d4d4d">Параметр</div>
<div class="t" style="left:282px;top:4px;font-size:12px;transform:scaleX(0.92);transform-origin:0 0;color:#4d4d4d">Значение (просмотр)</div>
<div class="t" style="left:530px;top:4px;font-size:12px;transform:scaleX(0.92);transform-origin:0 0;color:#4d4d4d">Источник</div>
<div class="a" style="left:0;top:20px;width:277px;height:19px;background:#fde28c"></div>
<div class="a" style="left:278px;top:20px;width:247px;height:19px;background:#fdf0c2"></div>
<div class="a" style="left:526px;top:20px;width:250px;height:19px;background:#e2e6e2"></div>
<svg class="a" style="left:6px;top:25px" width="14" height="11" viewBox="0 0 14 11"><path d="M0.6 0.8 Q5 0 11.2 0.4 V4 L12.9 5.3 L11.2 6.6 L10.9 8.7 Q6 9.2 2.4 9.8 L1.1 8.3 L1.8 7.2 L0.2 6.2 L1.2 4.6 L0.2 3.2 Z" fill="#5fcc7c"/></svg>
<div class="t" style="left:24px;top:25px;font-size:12px;transform:scaleX(0.92);transform-origin:0 0;color:#444">Имя процесса</div>
<div class="a" style="left:0;top:40px;width:775px;height:19px;background:#dcdcdc"></div>
<div class="a" style="left:0;top:39px;width:775px;height:1px;background:#e6e6e6"></div>
<svg class="a" style="left:6px;top:45px" width="14" height="10" viewBox="0 0 14 10"><path d="M0.2 0.2 H12.8 V2.6 L10.6 4.6 L12.4 7 V8.8 H1.6 L0.8 5.2 Z" fill="#fdb026"/></svg>
<div class="t" style="left:24px;top:44px;font-size:12px;transform:scaleX(0.92);transform-origin:0 0;color:#444">Задержка между попытками</div>
<div class="a" style="left:0;top:59px;width:775px;height:19px;background:#dcdcdc"></div>
<div class="a" style="left:0;top:58px;width:775px;height:1px;background:#e6e6e6"></div>
<svg class="a" style="left:6px;top:64px" width="14" height="10" viewBox="0 0 14 10"><path d="M0.2 0.2 H12.8 V2.6 L10.6 4.6 L12.4 7 V8.8 H1.6 L0.8 5.2 Z" fill="#fdb026"/></svg>
<div class="t" style="left:24px;top:63px;font-size:12px;transform:scaleX(0.92);transform-origin:0 0;color:#444">Количество попыток</div>
<div class="a" style="left:0;top:78px;width:775px;height:19px;background:#dcdcdc"></div>
<div class="a" style="left:0;top:77px;width:775px;height:1px;background:#e6e6e6"></div>
<svg class="a" style="left:6px;top:83px" width="14" height="10" viewBox="0 0 14 10"><path d="M0.2 0.2 H12.8 V2.6 L10.6 4.6 L12.4 7 V8.8 H1.6 L0.8 5.2 Z" fill="#fdb026"/></svg>
<div class="t" style="left:24px;top:82px;font-size:12px;transform:scaleX(0.92);transform-origin:0 0;color:#444">Лимит времени</div>
<div class="a" style="left:0;top:97px;width:775px;height:19px;background:#dcdcdc"></div>
<div class="a" style="left:0;top:96px;width:775px;height:1px;background:#e6e6e6"></div>
<svg class="a" style="left:6px;top:102px" width="14" height="10" viewBox="0 0 14 10"><path d="M0.2 0.2 H12.8 V2.6 L10.6 4.6 L12.4 7 V8.8 H1.6 L0.8 5.2 Z" fill="#fdb026"/></svg>
<div class="t" style="left:24px;top:101px;font-size:12px;transform:scaleX(0.92);transform-origin:0 0;color:#444">С дочерними</div>
<div class="t" style="left:282px;top:25px;font-size:12px;transform:scaleX(0.92);transform-origin:0 0;color:#1010d0">1cv8s.exe</div>
<div class="t" style="left:530px;top:25px;font-size:12px;transform:scaleX(0.92);transform-origin:0 0;color:#444">1cv8s.exe</div>
<div class="a" style="left:23px;top:248px;width:729px;height:7px;border-radius:4px;background:#d4d4d4"></div>
<div class="a" style="left:23px;top:248px;width:638px;height:7px;border-radius:4px;background:#9c9c9c"></div>
<svg class="a" style="left:9px;top:248px" width="5" height="7" viewBox="0 0 5 7"><path d="M4.5 0 V7 L0.5 3.5 Z" fill="#c8c8c8"/></svg>
<svg class="a" style="left:762px;top:248px" width="5" height="7" viewBox="0 0 5 7"><path d="M0.5 0 V7 L4.5 3.5 Z" fill="#444"/></svg>
</div>
<div class="a" style="left:30px;top:574px;width:774px;height:24px;border:4.5px solid #e03a2e;border-top-width:5px;border-radius:7px"></div>
<svg class="a" style="left:816px;top:510px" width="13" height="9" viewBox="0 0 13 9"><path d="M1 1.5 L6.5 7 L12 1.5" fill="none" stroke="#1a9a50" stroke-width="1.6"/></svg>
<div class="t" style="left:834px;top:506px;font-size:16px;transform:scaleX(1.02);transform-origin:0 0;color:#1a9a50">Источники заполнения параметров</div>
<div class="btn" style="left:822px;top:527px;width:70px;height:21px"></div>
<div class="t" style="left:832px;top:532px;font-size:12px;transform:scaleX(0.92);transform-origin:0 0;color:#444">Добавить</div>
<div class="btn" style="left:906px;top:527px;width:52px;height:21px;box-shadow:0 1px 1px rgba(0,0,0,.1);border-color:#c8c8c8"></div>
<div class="vl" style="left:932px;top:528px;height:19px;background:#d4d4d4"></div>
<svg class="a" style="left:912px;top:530px" width="14" height="14" viewBox="0 0 14 14"><path d="M7 1 L13 7 H9.5 V13 H4.5 V7 H1 Z" fill="#abb5bd"/></svg>
<svg class="a" style="left:938px;top:530px" width="14" height="14" viewBox="0 0 14 14"><path d="M7 13 L13 7 H9.5 V1 H4.5 V7 H1 Z" fill="#abb5bd"/></svg>
<div class="a" style="left:822px;top:556px;width:210px;height:258px;border:1px solid #a9a9a9;overflow:hidden">
<div class="a" style="left:0;top:0;width:300px;height:41px;background:#fff"></div>
<div class="a" style="left:0;top:41px;width:300px;height:1px;background:#c4c4c4"></div>
<div class="a" style="left:1px;top:1px;width:22px;height:39px;background:#f0f0f0"></div>
<div class="a" style="left:24px;top:0;width:1px;height:41px;background:#cfcfcf"></div>
<div class="a" style="left:26px;top:1px;width:125px;height:39px;background:#f0f0f0"></div>
<div class="a" style="left:152px;top:0;width:1px;height:41px;background:#cfcfcf"></div>
<div class="a" style="left:154px;top:1px;width:100px;height:18px;background:#f0f0f0"></div>
<div class="a" style="left:153px;top:20px;width:100px;height:1px;background:#cfcfcf"></div>
<div class="a" style="left:154px;top:22px;width:100px;height:18px;background:#f0f0f0"></div>
<div class="t" style="left:29px;top:4px;font-size:12px;transform:scaleX(0.92);transform-origin:0 0;color:#4d4d4d">Имя шаблона</div>
<div class="t" style="left:157px;top:4px;font-size:12px;transform:scaleX(0.92);transform-origin:0 0;color:#4d4d4d">Способ заполнения</div>
<div class="t" style="left:157px;top:25px;font-size:12px;transform:scaleX(0.92);transform-origin:0 0;color:#4d4d4d">Тип значения</div>
<div class="a" style="left:23px;top:246px;width:300px;height:7px;border-radius:4px;background:#9c9c9c"></div>
<svg class="a" style="left:9px;top:246px" width="5" height="7" viewBox="0 0 5 7"><path d="M4.5 0 V7 L0.5 3.5 Z" fill="#c8c8c8"/></svg>
</div>
<div class="a" style="left:21px;top:820px;width:1004px;height:33px;background:#f3f8f4"></div>
<svg class="a" style="left:24px;top:823px" width="28" height="26" viewBox="0 0 28 26"><defs><linearGradient id="hg" x1="0" y1="0" x2="1" y2="1"><stop offset="0" stop-color="#fffce8"/><stop offset="1" stop-color="#fde268"/></linearGradient></defs><path d="M13.2 19.4 C6 19 1.1 15 1.1 10.2 C1.1 5 6.6 0.9 13.5 0.9 C20.4 0.9 25.9 5 25.9 10.2 C25.9 14.6 21.8 18.2 17.8 19.2 L16.6 24.4 Z" fill="url(#hg)" stroke="#dfb826" stroke-width="1.2"/><text x="13.9" y="15.8" text-anchor="middle" font-family="Liberation Sans" font-weight="bold" font-size="14.5" fill="#2ac42a" stroke="#0f8f0f" stroke-width="0.5">?</text></svg>
<div class="t" style="left:59px;top:831px;font-size:12px;font-weight:bold;color:#333">Имя процесса:</div>
<div class="t" style="left:151px;top:831px;font-size:12px;transform:scaleX(0.92);transform-origin:0 0;color:#444">(строка) - имя завершаемого процесса</div>
<div class="a" style="left:0;top:882px;width:1025px;height:1px;background:#c8b878"></div>
</body></html>
